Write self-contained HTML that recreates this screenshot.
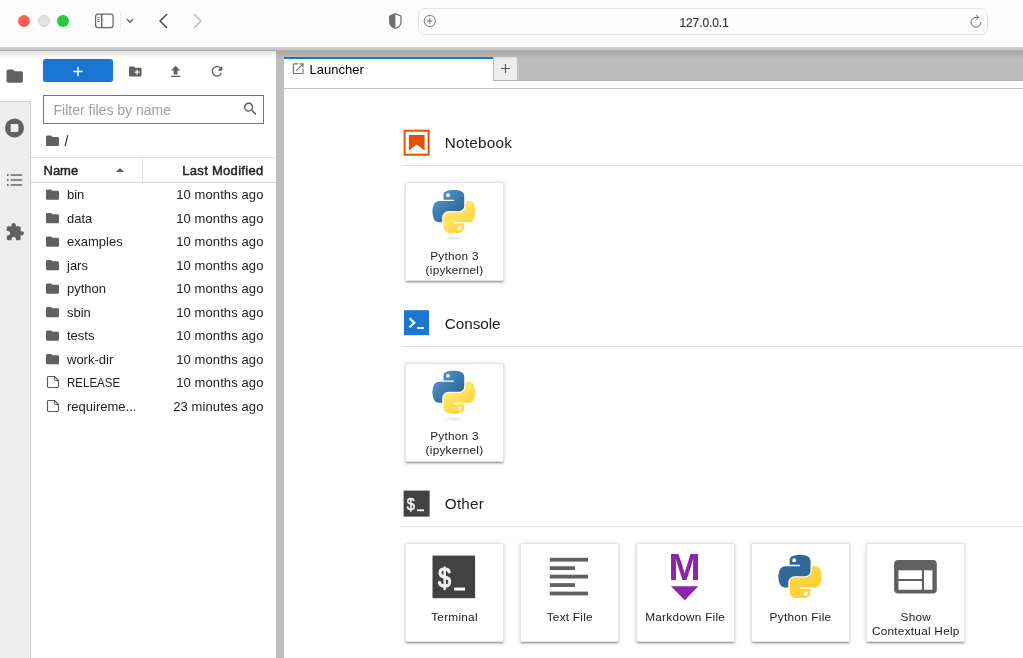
<!DOCTYPE html>
<html><head><meta charset="utf-8"><title>JupyterLab</title>
<style>
*{box-sizing:border-box;margin:0;padding:0}
html,body{width:1023px;height:658px;overflow:hidden;background:#fff;font-family:"Liberation Sans",sans-serif;color:#212121}
.abs{position:absolute}
#chrome{position:absolute;left:0;top:0;width:1023px;height:47px;background:#fcfcfc}
#chromeline{position:absolute;left:0;top:47px;width:1023px;height:4px;background:linear-gradient(#d2d2d2 0,#c4c4c4 70%,#adadad 80%,#ababab 100%)}
.tl{position:absolute;top:15.2px;width:12px;height:12px;border-radius:50%}
#url{position:absolute;left:418px;top:8px;width:570px;height:27px;border:1px solid #e2e2e2;border-radius:7px;background:#fdfdfd}
#urltxt{position:absolute;left:604px;top:15.1px;width:200px;text-align:center;font-size:12px;line-height:16px;color:#3c3c3c;letter-spacing:-0.1px;-webkit-text-stroke:0.2px #3c3c3c}
#side{position:absolute;left:0;top:51px;width:31px;height:607px;background:#eeeeee;border-right:1px solid #cdcdcd}
#sidetab{position:absolute;left:0;top:51px;width:32px;height:50px;background:#fff}
#sidetabline{position:absolute;left:0;top:101px;width:31px;height:1px;background:#d4d4d4}
#fb{position:absolute;left:32px;top:51px;width:244px;height:607px;background:#fff}
#split{position:absolute;left:276px;top:51px;width:8px;height:607px;background:#bdbdbd}
#tabbar{position:absolute;left:284px;top:51px;width:739px;height:30px;background:#bdbdbd}
#tab{position:absolute;left:284px;top:57px;width:209px;height:32px;background:#fff;border-top:2px solid #1976d2}
#tabplus{position:absolute;left:493px;top:57px;width:24px;height:24px;background:#eeeeee;border-left:1px solid #bcbcbc;border-top:1px solid #dcdcdc}
#tabbarline{position:absolute;left:493px;top:80px;width:530px;height:1px;background:#b2b2b2}
#main{position:absolute;left:284px;top:81px;width:739px;height:577px;background:#fff}
#mainline{position:absolute;left:284px;top:88px;width:739px;height:1px;background:#c4c4c4}
.shade{position:absolute;left:0;top:51px;width:1023px;height:8px;background:linear-gradient(rgba(0,0,0,.12),rgba(0,0,0,.04) 60%,rgba(0,0,0,0))}
#newbtn{position:absolute;left:43px;top:58.5px;width:70px;height:23.5px;background:#1976d2;border-radius:2.5px}
#filter{position:absolute;left:43px;top:95px;width:221px;height:28.5px;border:1px solid #757575;background:#fff}
#filtertxt{position:absolute;left:53.5px;top:100.9px;font-size:14px;line-height:18px;color:#9e9e9e;white-space:nowrap}
.hline{position:absolute;height:1px;background:#e0e0e0}
.hdr{position:absolute;top:158.8px;height:24px;line-height:24.5px;font-size:13px;font-weight:normal;-webkit-text-stroke:0.45px #212121;color:#212121;white-space:nowrap}
.row{position:absolute;left:32px;width:244px;height:23.5px;line-height:23.5px;font-size:13px;white-space:nowrap}
.row .nm{position:absolute;left:35px;top:0.6px}
.row .md{position:absolute;right:12.5px;top:0.6px;letter-spacing:0.1px}
.sect{position:absolute;left:444.8px;font-size:15.3px;line-height:20px;white-space:nowrap;color:#212121}
.sline{position:absolute;left:401px;width:622px;height:1px;background:#e0e0e0}
.card{position:absolute;width:99px;height:99px;background:#fff;border:1px solid #e4e4e4;border-radius:1.8px;box-shadow:0 2.7px 0.9px -1.8px rgba(0,0,0,.2),0 1.8px 1.8px 0 rgba(0,0,0,.14),0 0.9px 4.5px 0 rgba(0,0,0,.12)}
.card .lbl{position:absolute;left:0;width:97px;text-align:center;font-size:11.8px;line-height:14.2px;top:65.5px;color:#212121;white-space:nowrap;letter-spacing:0.25px}
#wrap{position:absolute;left:0;top:0;width:1023px;height:658px;will-change:transform}
</style></head><body><div id="wrap">
<div id="side"></div><div id="sidetab"></div><div id="sidetabline"></div>
<div id="fb"></div>
<div id="split"></div>
<div id="tabbar"></div>
<div id="main"></div>
<div id="tab"></div><div id="tabplus"></div><div id="tabbarline"></div>
<div id="mainline"></div>
<div class="shade"></div>

<svg class="abs" style="left:4.00px;top:66.00px" width="21" height="20" viewBox="-1.048 -0.365 25.584 24.365"><path fill="#616161" d="M10 4H4c-1.1 0-1.99.9-1.99 2L2 18c0 1.1.9 2 2 2h16c1.1 0 2-.9 2-2V8c0-1.1-.9-2-2-2h-8l-2-2z"/></svg>
<svg class="abs" style="left:5.00px;top:118.00px" width="19" height="20" viewBox="0.000 -0.500 19.000 20.000"><circle cx="9.5" cy="9.5" r="9.5" fill="#616161"/><rect x="5.6" y="5.6" width="7.8" height="7.8" rx="0.9" fill="#eee"/></svg>
<svg class="abs" style="left:6.00px;top:172.00px" width="18" height="16" viewBox="0.000 0.000 18.000 16.000"><g fill="#616161"><rect x="4.6" y="2.3" width="11.4" height="1.4"/><rect x="4.6" y="7.3" width="11.4" height="1.4"/><rect x="4.6" y="12.3" width="11.4" height="1.4"/><circle cx="1.8" cy="3" r="0.95"/><circle cx="1.8" cy="8" r="0.95"/><circle cx="1.8" cy="13" r="0.95"/></g></svg>
<svg class="abs" style="left:5.00px;top:222.00px" width="20" height="20" viewBox="-0.122 -0.244 24.365 24.365"><path fill="#616161" d="M20.5 11H19V7c0-1.1-.9-2-2-2h-4V3.500C13 2.120 11.880 1 10.500 1S8 2.120 8 3.500V5H4c-1.100 0-1.990.9-1.990 2v3.800H3.500c1.490 0 2.700 1.210 2.700 2.700s-1.210 2.700-2.700 2.700H2V20c0 1.100.9 2 2 2h3.800v-1.500c0-1.490 1.210-2.700 2.700-2.700 1.490 0 2.700 1.210 2.700 2.700V22H17c1.100 0 2-.9 2-2v-4h1.500c1.380 0 2.500-1.120 2.500-2.500S21.880 11 20.500 11z"/></svg>
<div id="newbtn"></div>
<svg class="abs" style="left:73.00px;top:66.00px" width="10" height="11" viewBox="0.000 -0.500 10.000 11.000"><path d="M5 0.3V9.7M0.3 5H9.7" stroke="#fff" stroke-width="1.35" fill="none"/></svg>
<svg class="abs" style="left:127.00px;top:64.00px" width="16" height="15" viewBox="-1.200 0.000 25.600 24.000"><path fill="#616161" d="M20 6h-8l-2-2H4c-1.110 0-1.990.89-1.990 2L2 18c0 1.110.89 2 2 2h16c1.110 0 2-.89 2-2V8c0-1.110-.89-2-2-2zm-1 8h-3v3h-2v-3h-3v-2h3V9h2v3h3v2z"/></svg>
<svg class="abs" style="left:167.00px;top:63.00px" width="17" height="17" viewBox="-1.063 -1.367 25.823 25.823"><path fill="#616161" d="M9 16h6v-6h4l-7-7-7 7h4zm-4 2h14v2H5z"/></svg>
<svg class="abs" style="left:209.00px;top:63.00px" width="16" height="17" viewBox="0.000 -0.450 24.000 25.500"><path fill="#616161" d="M17.650 6.350C16.200 4.900 14.210 4 12 4c-4.420 0-7.990 3.580-7.990 8s3.570 8 7.990 8c3.730 0 6.840-2.550 7.730-6h-2.080c-.82 2.330-3.040 4-5.650 4-3.310 0-6-2.690-6-6s2.690-6 6-6c1.660 0 3.140.69 4.220 1.780L13 11h7V4l-2.350 2.350z"/></svg>
<div id="filter"></div><div id="filtertxt">Filter files by name</div>
<svg class="abs" style="left:241.00px;top:100.00px" width="18" height="18" viewBox="-1.271 -0.565 25.412 25.412"><path fill="#616161" d="M15.500 14h-.79l-.28-.27C15.410 12.590 16 11.110 16 9.500 16 5.910 13.090 3 9.500 3S3 5.910 3 9.500 5.910 16 9.500 16c1.610 0 3.090-.59 4.230-1.570l.27.28v.79l5 4.990L20.490 19l-4.990-5zm-6 0C7.010 14 5 11.990 5 9.500S7.010 5 9.500 5 14 7.010 14 9.500 11.990 14 9.500 14z"/></svg>
<svg class="abs" style="left:44.00px;top:133.00px" width="17" height="16" viewBox="-1.077 0.000 26.154 24.615"><path fill="#616161" d="M10 4H4c-1.1 0-1.99.9-1.99 2L2 18c0 1.1.9 2 2 2h16c1.1 0 2-.9 2-2V8c0-1.1-.9-2-2-2h-8l-2-2z"/></svg>
<div class="abs" style="left:64.5px;top:131.5px;font-size:14px;line-height:18px;color:#212121">/</div>
<div class="hline" style="left:31px;top:157px;width:245px"></div>
<div class="hline" style="left:31px;top:182px;width:245px;background:#d6d6d6"></div>
<div class="hline" style="left:142px;top:158px;width:1px;height:24px"></div>
<div class="hdr" style="left:43.5px">Name</div>
<div class="hdr" style="right:759.5px;letter-spacing:0.3px">Last Modified</div>
<svg class="abs" style="left:115.00px;top:167.00px" width="10" height="6" viewBox="-0.500 -0.500 10.000 6.000"><path fill="#616161" d="M0.3 4.6L4.5 0.4L8.700 4.600z"/></svg>
<div class="row" style="top:182.75px"><svg class="abs" style="left:12.00px;top:3.25px" width="17" height="17" viewBox="-1.077 -1.231 26.154 26.154"><path fill="#616161" d="M10 4H4c-1.1 0-1.99.9-1.99 2L2 18c0 1.1.9 2 2 2h16c1.1 0 2-.9 2-2V8c0-1.1-.9-2-2-2h-8l-2-2z"/></svg><span class="nm">bin</span><span class="md">10 months ago</span></div>
<div class="row" style="top:206.25px"><svg class="abs" style="left:12.00px;top:3.75px" width="17" height="16" viewBox="-1.077 -0.462 26.154 24.615"><path fill="#616161" d="M10 4H4c-1.1 0-1.99.9-1.99 2L2 18c0 1.1.9 2 2 2h16c1.1 0 2-.9 2-2V8c0-1.1-.9-2-2-2h-8l-2-2z"/></svg><span class="nm">data</span><span class="md">10 months ago</span></div>
<div class="row" style="top:229.75px"><svg class="abs" style="left:12.00px;top:3.25px" width="17" height="17" viewBox="-1.077 -1.231 26.154 26.154"><path fill="#616161" d="M10 4H4c-1.1 0-1.99.9-1.99 2L2 18c0 1.1.9 2 2 2h16c1.1 0 2-.9 2-2V8c0-1.1-.9-2-2-2h-8l-2-2z"/></svg><span class="nm">examples</span><span class="md">10 months ago</span></div>
<div class="row" style="top:253.25px"><svg class="abs" style="left:12.00px;top:3.75px" width="17" height="16" viewBox="-1.077 -0.462 26.154 24.615"><path fill="#616161" d="M10 4H4c-1.1 0-1.99.9-1.99 2L2 18c0 1.1.9 2 2 2h16c1.1 0 2-.9 2-2V8c0-1.1-.9-2-2-2h-8l-2-2z"/></svg><span class="nm">jars</span><span class="md">10 months ago</span></div>
<div class="row" style="top:276.75px"><svg class="abs" style="left:12.00px;top:3.25px" width="17" height="17" viewBox="-1.077 -1.231 26.154 26.154"><path fill="#616161" d="M10 4H4c-1.1 0-1.99.9-1.99 2L2 18c0 1.1.9 2 2 2h16c1.1 0 2-.9 2-2V8c0-1.1-.9-2-2-2h-8l-2-2z"/></svg><span class="nm">python</span><span class="md">10 months ago</span></div>
<div class="row" style="top:300.25px"><svg class="abs" style="left:12.00px;top:3.75px" width="17" height="16" viewBox="-1.077 -0.462 26.154 24.615"><path fill="#616161" d="M10 4H4c-1.1 0-1.99.9-1.99 2L2 18c0 1.1.9 2 2 2h16c1.1 0 2-.9 2-2V8c0-1.1-.9-2-2-2h-8l-2-2z"/></svg><span class="nm">sbin</span><span class="md">10 months ago</span></div>
<div class="row" style="top:323.75px"><svg class="abs" style="left:12.00px;top:3.25px" width="17" height="17" viewBox="-1.077 -1.231 26.154 26.154"><path fill="#616161" d="M10 4H4c-1.1 0-1.99.9-1.99 2L2 18c0 1.1.9 2 2 2h16c1.1 0 2-.9 2-2V8c0-1.1-.9-2-2-2h-8l-2-2z"/></svg><span class="nm">tests</span><span class="md">10 months ago</span></div>
<div class="row" style="top:347.25px"><svg class="abs" style="left:12.00px;top:3.75px" width="17" height="16" viewBox="-1.077 -0.462 26.154 24.615"><path fill="#616161" d="M10 4H4c-1.1 0-1.99.9-1.99 2L2 18c0 1.1.9 2 2 2h16c1.1 0 2-.9 2-2V8c0-1.1-.9-2-2-2h-8l-2-2z"/></svg><span class="nm">work-dir</span><span class="md">10 months ago</span></div>
<div class="row" style="top:370.75px"><svg class="abs" style="left:14.00px;top:4.25px" width="14" height="14" viewBox="-0.500 -0.500 14.000 14.000"><path fill="none" stroke="#5a5a5a" stroke-width="1.15" stroke-linejoin="round" d="M1.900 1H8L12 5V11.100a.9.9 0 0 1-.9.9H1.900a.9.9 0 0 1-.9-.9V1.900a.9.9 0 0 1 .9-.9z"/><path fill="none" stroke="#5a5a5a" stroke-width="1" d="M7.900 1.200V4.300a.8.8 0 0 0 .8.8H11.800"/></svg><span class="nm" style="display:inline-block;transform:scaleX(0.885);transform-origin:0 50%">RELEASE</span><span class="md">10 months ago</span></div>
<div class="row" style="top:394.25px"><svg class="abs" style="left:14.00px;top:4.75px" width="14" height="14" viewBox="-0.500 -0.500 14.000 14.000"><path fill="none" stroke="#5a5a5a" stroke-width="1.15" stroke-linejoin="round" d="M1.900 1H8L12 5V11.100a.9.9 0 0 1-.9.9H1.900a.9.9 0 0 1-.9-.9V1.900a.9.9 0 0 1 .9-.9z"/><path fill="none" stroke="#5a5a5a" stroke-width="1" d="M7.900 1.200V4.300a.8.8 0 0 0 .8.8H11.800"/></svg><span class="nm">requireme...</span><span class="md">23 minutes ago</span></div>
<svg class="abs" style="left:291.00px;top:61.00px" width="15" height="15" viewBox="0.000 -0.833 25.000 25.000"><path fill="#757575" d="M19 19H5V5h7V3H5c-1.110 0-2 .9-2 2v14c0 1.100.89 2 2 2h14c1.100 0 2-.9 2-2v-7h-2v7zM14 3v2h3.590l-9.830 9.830 1.410 1.410L19 6.410V10h2V3h-7z"/></svg>
<div class="abs" style="left:309.5px;top:60.5px;font-size:13px;line-height:18px;color:#000;white-space:nowrap">Launcher</div>
<svg class="abs" style="left:500.00px;top:63.00px" width="11" height="11" viewBox="0.000 0.000 11.000 11.000"><path d="M5.500 0.900V10.100M0.900 5.500H10.100" stroke="#555" stroke-width="1.1" fill="none"/></svg>
<svg class="abs" style="left:403.00px;top:129.00px" width="27" height="27" viewBox="-0.600 -0.700 27.000 27.000"><rect x="1" y="1" width="24" height="24" fill="#fff" stroke="#e65100" stroke-width="2"/><path fill="#e65100" d="M5.300 5.300H21V20.900L13.150 14.700L5.300 20.900z"/></svg>
<div class="sect" style="top:133.3px;letter-spacing:0.22px">Notebook</div>
<div class="sline" style="top:165px"></div>
<svg class="abs" style="left:404.00px;top:310.00px" width="25" height="26" viewBox="0.000 -0.200 25.000 26.000"><rect width="25" height="25" fill="#1976d2"/><path d="M5.500 8.100L10.300 12.600L5.500 17.100" fill="none" stroke="#fff" stroke-width="2.200"/><rect x="13.200" y="16.900" width="6.700" height="1.900" fill="#fff"/></svg>
<div class="sect" style="top:313.9px;letter-spacing:-0.05px">Console</div>
<div class="sline" style="top:346px"></div>
<svg class="abs" style="left:403.00px;top:490.00px" width="27" height="27" viewBox="-0.600 -0.600 27.000 27.000"><rect width="26" height="26" fill="#424242"/><text transform="translate(3.200,19.400) scale(0.86,1)" font-family="Liberation Sans, sans-serif" font-size="17" fill="#f2f2f2" stroke="#f2f2f2" stroke-width="0.600" stroke-linejoin="round">$</text><rect x="13.400" y="18.800" width="7" height="1.800" fill="#fff"/></svg>
<div class="sect" style="top:494.3px;letter-spacing:0.2px">Other</div>
<div class="sline" style="top:526px"></div>
<div class="card" style="left:405px;top:182px"><svg class="abs" style="left:26.00px;top:7.00px" width="44" height="43" viewBox="-1.034 0.000 113.786 111.189"><defs><linearGradient id="pba" x1="0" y1="0" x2="0.75" y2="0.75"><stop offset="0" stop-color="#5a9fd4"/><stop offset="1" stop-color="#306998"/></linearGradient><linearGradient id="pya" x1="0.75" y1="0.85" x2="0.3" y2="0.2"><stop offset="0" stop-color="#ffd43b"/><stop offset="1" stop-color="#ffe873"/></linearGradient></defs><path fill="url(#pba)" d="M54.918785 9.1927389e-4C50.335132 0.02221727 45.957846 0.41313697 42.106285 1.0946693 30.760069 3.0991731 28.700036 7.2947714 28.700035 15.032169v10.21875h26.8125v3.40625H28.700035 18.637535c-7.792459 0-14.6157588 4.683717-16.7499998 13.59375-2.46181998 10.212966-2.57101508 16.586023 0 27.25 1.9059283 7.937852 6.4575432 13.593748 14.2499998 13.59375h9.21875v-12.25c0-8.849902 7.657144-16.656248 16.75-16.65625h26.78125c7.454951 0 13.406253-6.138164 13.40625-13.625v-25.53125c0-7.2663386-6.12998-12.7247771-13.40625-13.9374997C64.281548 0.32794397 59.502438-0.02037903 54.918785 9.1927389e-4zm-14.5 8.21875012611c2.769547 0 5.03125 2.2986456 5.03125 5.1249996-2e-6 2.816336-2.261703 5.09375-5.03125 5.09375-2.779476-1e-6-5.03125-2.277415-5.03125-5.09375-1e-6-2.826353 2.251774-5.1249996 5.03125-5.1249996z"/><path fill="url(#pya)" d="M85.637535 28.657169v11.90625c0 9.230755-7.825895 16.999999-16.75 17h-26.78125c-7.335833 0-13.406249 6.278483-13.40625 13.625v25.531247c0 7.266344 6.318588 11.540324 13.40625 13.625004 8.487331 2.49561 16.626237 2.94663 26.78125 0 6.750155-1.95439 13.406253-5.88761 13.40625-13.625004V86.500919h-26.78125v-3.40625h26.78125 13.406254c7.792461 0 10.696251-5.435408 13.406241-13.59375 2.79933-8.398886 2.68022-16.475776 0-27.25-1.92578-7.757441-5.60387-13.59375-13.406241-13.59375zM70.575035 93.313419c2.779447 3e-6 5.03125 2.277417 5.03125 5.093747-2e-6 2.826354-2.251775 5.125004-5.03125 5.125004-2.76955 0-5.03125-2.29865-5.03125-5.125004 2e-6-2.81633 2.261697-5.093747 5.03125-5.093747z"/></svg><svg class="abs" style="left:32.00px;top:52.00px" width="32" height="8" viewBox="0.000 0.000 32.000 8.000"><defs><radialGradient id="sha"><stop offset="0" stop-color="#000" stop-opacity="0.11"/><stop offset="1" stop-color="#000" stop-opacity="0"/></radialGradient></defs><ellipse cx="16" cy="3.400" rx="11" ry="2.400" fill="url(#sha)"/></svg><div class="lbl">Python 3<br>(ipykernel)</div></div>
<div class="card" style="left:405px;top:362.7px"><svg class="abs" style="left:26.00px;top:6.30px" width="44" height="44" viewBox="-1.034 -1.810 113.786 113.775"><defs><linearGradient id="pbb" x1="0" y1="0" x2="0.75" y2="0.75"><stop offset="0" stop-color="#5a9fd4"/><stop offset="1" stop-color="#306998"/></linearGradient><linearGradient id="pyb" x1="0.75" y1="0.85" x2="0.3" y2="0.2"><stop offset="0" stop-color="#ffd43b"/><stop offset="1" stop-color="#ffe873"/></linearGradient></defs><path fill="url(#pbb)" d="M54.918785 9.1927389e-4C50.335132 0.02221727 45.957846 0.41313697 42.106285 1.0946693 30.760069 3.0991731 28.700036 7.2947714 28.700035 15.032169v10.21875h26.8125v3.40625H28.700035 18.637535c-7.792459 0-14.6157588 4.683717-16.7499998 13.59375-2.46181998 10.212966-2.57101508 16.586023 0 27.25 1.9059283 7.937852 6.4575432 13.593748 14.2499998 13.59375h9.21875v-12.25c0-8.849902 7.657144-16.656248 16.75-16.65625h26.78125c7.454951 0 13.406253-6.138164 13.40625-13.625v-25.53125c0-7.2663386-6.12998-12.7247771-13.40625-13.9374997C64.281548 0.32794397 59.502438-0.02037903 54.918785 9.1927389e-4zm-14.5 8.21875012611c2.769547 0 5.03125 2.2986456 5.03125 5.1249996-2e-6 2.816336-2.261703 5.09375-5.03125 5.09375-2.779476-1e-6-5.03125-2.277415-5.03125-5.09375-1e-6-2.826353 2.251774-5.1249996 5.03125-5.1249996z"/><path fill="url(#pyb)" d="M85.637535 28.657169v11.90625c0 9.230755-7.825895 16.999999-16.75 17h-26.78125c-7.335833 0-13.406249 6.278483-13.40625 13.625v25.531247c0 7.266344 6.318588 11.540324 13.40625 13.625004 8.487331 2.49561 16.626237 2.94663 26.78125 0 6.750155-1.95439 13.406253-5.88761 13.40625-13.625004V86.500919h-26.78125v-3.40625h26.78125 13.406254c7.792461 0 10.696251-5.435408 13.406241-13.59375 2.79933-8.398886 2.68022-16.475776 0-27.25-1.92578-7.757441-5.60387-13.59375-13.406241-13.59375zM70.575035 93.313419c2.779447 3e-6 5.03125 2.277417 5.03125 5.093747-2e-6 2.826354-2.251775 5.125004-5.03125 5.125004-2.76955 0-5.03125-2.29865-5.03125-5.125004 2e-6-2.81633 2.261697-5.093747 5.03125-5.093747z"/></svg><svg class="abs" style="left:32.00px;top:51.30px" width="32" height="9" viewBox="0.000 -0.700 32.000 9.000"><defs><radialGradient id="shb"><stop offset="0" stop-color="#000" stop-opacity="0.11"/><stop offset="1" stop-color="#000" stop-opacity="0"/></radialGradient></defs><ellipse cx="16" cy="3.400" rx="11" ry="2.400" fill="url(#shb)"/></svg><div class="lbl">Python 3<br>(ipykernel)</div></div>
<div class="card" style="left:405px;top:543.3px"><svg class="abs" style="left:26.00px;top:10.70px" width="44" height="44" viewBox="-0.500 -0.600 44.000 44.000"><rect width="42.600" height="42.600" fill="#424242"/><text transform="translate(5.400,31.500) scale(0.86,1)" font-family="Liberation Sans, sans-serif" font-size="27.500" fill="#f2f2f2" stroke="#f2f2f2" stroke-width="1.050" stroke-linejoin="round">$</text><rect x="21.500" y="32" width="11" height="2.900" fill="#fff"/></svg><div class="lbl">Terminal</div></div>
<div class="card" style="left:520.3px;top:543.3px"><svg class="abs" style="left:27.70px;top:12.70px" width="40" height="40" viewBox="-0.800 -0.800 40.000 40.000"><g fill="#616161"><rect x="0" y="0" width="38.200" height="3.800"/><rect x="0" y="8.450" width="25.200" height="3.800"/><rect x="0" y="16.900" width="38.200" height="3.800"/><rect x="0" y="25.350" width="25.200" height="3.800"/><rect x="0" y="33.800" width="38.200" height="3.800"/></g></svg><div class="lbl">Text File</div></div>
<div class="card" style="left:635.7px;top:543.3px"><svg class="abs" style="left:27.30px;top:7.70px" width="43" height="51" viewBox="-0.700 -0.300 43.000 51.000"><text transform="translate(19.700,27.700) scale(1.04,1)" text-anchor="middle" font-family="Liberation Sans, sans-serif" font-weight="bold" font-size="37" fill="#8e24aa">M</text><path fill="#8e24aa" d="M6.300 33.900H33.700L20 48z"/></svg><div class="lbl">Markdown File</div></div>
<div class="card" style="left:751px;top:543.3px"><svg class="abs" style="left:26.00px;top:10.70px" width="44" height="43" viewBox="-1.025 0.000 112.737 110.179"><path fill="#306998" d="M54.918785 9.1927389e-4C50.335132 0.02221727 45.957846 0.41313697 42.106285 1.0946693 30.760069 3.0991731 28.700036 7.2947714 28.700035 15.032169v10.21875h26.8125v3.40625H28.700035 18.637535c-7.792459 0-14.6157588 4.683717-16.7499998 13.59375-2.46181998 10.212966-2.57101508 16.586023 0 27.25 1.9059283 7.937852 6.4575432 13.593748 14.2499998 13.59375h9.21875v-12.25c0-8.849902 7.657144-16.656248 16.75-16.65625h26.78125c7.454951 0 13.406253-6.138164 13.40625-13.625v-25.53125c0-7.2663386-6.12998-12.7247771-13.40625-13.9374997C64.281548 0.32794397 59.502438-0.02037903 54.918785 9.1927389e-4zm-14.5 8.21875012611c2.769547 0 5.03125 2.2986456 5.03125 5.1249996-2e-6 2.816336-2.261703 5.09375-5.03125 5.09375-2.779476-1e-6-5.03125-2.277415-5.03125-5.09375-1e-6-2.826353 2.251774-5.1249996 5.03125-5.1249996z"/><path fill="#ffd43b" d="M85.637535 28.657169v11.90625c0 9.230755-7.825895 16.999999-16.75 17h-26.78125c-7.335833 0-13.406249 6.278483-13.40625 13.625v25.531247c0 7.266344 6.318588 11.540324 13.40625 13.625004 8.487331 2.49561 16.626237 2.94663 26.78125 0 6.750155-1.95439 13.406253-5.88761 13.40625-13.625004V86.500919h-26.78125v-3.40625h26.78125 13.406254c7.792461 0 10.696251-5.435408 13.406241-13.59375 2.79933-8.398886 2.68022-16.475776 0-27.25-1.92578-7.757441-5.60387-13.59375-13.406241-13.59375zM70.575035 93.313419c2.779447 3e-6 5.03125 2.277417 5.03125 5.093747-2e-6 2.826354-2.251775 5.125004-5.03125 5.125004-2.76955 0-5.03125-2.29865-5.03125-5.125004 2e-6-2.81633 2.261697-5.093747 5.03125-5.093747z"/></svg><div class="lbl">Python File</div></div>
<div class="card" style="left:866.3px;top:543.3px"><svg class="abs" style="left:26.70px;top:14.70px" width="45" height="36" viewBox="-0.100 -0.900 45.000 36.000"><rect x="0" y="0" width="42.700" height="33.700" rx="4" fill="#616161"/><g fill="#fff"><rect x="4.400" y="10.400" width="23.400" height="8.700"/><rect x="4.400" y="21.100" width="23.400" height="8.750"/><rect x="29.900" y="10.400" width="8.400" height="19.450"/></g></svg><div class="lbl">Show<br>Contextual Help</div></div>
<div id="chrome">
 <div class="tl" style="left:18.2px;background:#fe5f57"></div>
 <div class="tl" style="left:38px;background:#e1e1e1;border:0.5px solid #d2d2d2"></div>
 <div class="tl" style="left:57.4px;background:#28c840"></div>
 <svg class="abs" style="left:94.00px;top:12.00px" width="21" height="18" viewBox="0.000 -0.500 21.000 18.000"><rect x="1.600" y="1.600" width="17.500" height="13.500" rx="2.300" fill="none" stroke="#666666" stroke-width="1.250"/><path d="M7.700 1.600V15.100" stroke="#666666" stroke-width="1.500"/><path d="M3.100 4.900H5.900M3.100 7H5.900M3.100 9H5.900" stroke="#666666" stroke-width="0.850"/></svg>
 <div class="abs" style="left:120px;top:12px;width:1px;height:18px;background:#ececec"></div>
 <svg class="abs" style="left:126.00px;top:17.00px" width="9" height="8" viewBox="0.000 0.000 9.000 8.000"><path d="M1.400 2.600L4 5.300L6.600 2.600" fill="none" stroke="#666666" stroke-width="1.400" stroke-linecap="round" stroke-linejoin="round"/></svg>
 <svg class="abs" style="left:157.00px;top:12.00px" width="12" height="18" viewBox="0.000 0.000 12.000 18.000"><path d="M9.600 2.500L3 9L9.600 15.500" fill="none" stroke="#4a4a4a" stroke-width="1.500" stroke-linecap="round" stroke-linejoin="round"/></svg>
 <svg class="abs" style="left:192.00px;top:12.00px" width="12" height="18" viewBox="0.000 0.000 12.000 18.000"><path d="M2.400 2.500L9 9L2.400 15.500" fill="none" stroke="#b9b9b9" stroke-width="1.500" stroke-linecap="round" stroke-linejoin="round"/></svg>
 <svg class="abs" style="left:387.00px;top:12.00px" width="17" height="18" viewBox="0.000 0.000 17.000 18.000"><path d="M8.350 1.700L2.700 4V10C2.700 13.200 5.200 15.400 8.350 16.500C11.500 15.400 14 13.200 14 10V4z" fill="#fdfdfd" stroke="#707070" stroke-width="1.250" stroke-linejoin="round"/><path d="M8.350 1.700L2.700 4V10C2.700 13.200 5.200 15.400 8.350 16.500z" fill="#707070"/></svg>
 <div id="url"></div>
 <svg class="abs" style="left:423.00px;top:14.00px" width="14" height="14" viewBox="0.000 0.000 14.000 14.000"><circle cx="6.800" cy="7" r="5.600" fill="none" stroke="#6a6a6a" stroke-width="0.900"/><path d="M6.800 4.300V9.700M4.100 7H9.500" stroke="#6a6a6a" stroke-width="0.900"/></svg>
 <div id="urltxt">127.0.0.1</div>
 <svg class="abs" style="left:969.00px;top:14.00px" width="14" height="15" viewBox="0.000 0.000 14.000 15.000"><path d="M11.900 8.300A4.900 4.900 0 1 1 7 3.400H9.200" fill="none" stroke="#6a6a6a" stroke-width="1" stroke-linecap="round"/><path d="M7.600 1.300L9.700 3.400L7.600 5.500" fill="none" stroke="#6a6a6a" stroke-width="1" stroke-linecap="round" stroke-linejoin="round"/></svg>
</div>
<div id="chromeline"></div>
</div></body></html>
